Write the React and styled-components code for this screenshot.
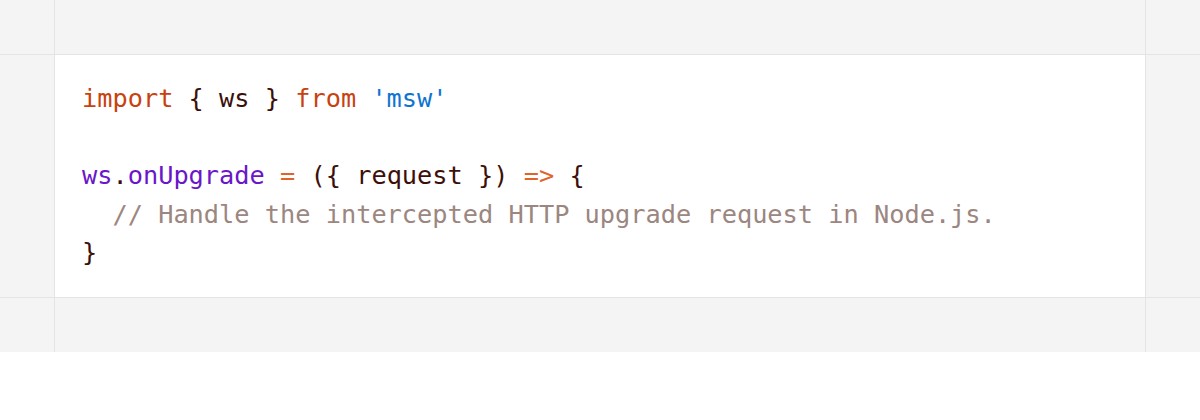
import React from 'react';
import styled, { createGlobalStyle } from 'styled-components';

const GlobalStyle = createGlobalStyle`
    html, body {
        margin: 0;
        padding: 0;
        background: #ffffff;
    }
`;

const Frame = styled.div`
    display: grid;
    grid-template-columns: 54px 1fr 54px;
    grid-template-rows: 54px 242px 54px;
    gap: 1px;
    background: #e4e4e4;
    width: 1200px;
`;

const Cell = styled.div`
    background: ${(p) => (p.main ? '#ffffff' : '#f4f4f4')};
`;

const Code = styled.pre`
    margin: 0;
    padding: 25px 0 0 27px;
    font-family: "DejaVu Sans Mono", "Liberation Mono", monospace;
    font-size: 25.3px;
    line-height: 38.5px;
    color: #3d0f0a;
    white-space: pre;
`;

const Line = styled.div`
    min-height: 38.5px;
`;

const Token = styled.span`
    color: ${(p) => p.color};
`;

const colors = {
    keyword: '#c8420f',
    string: '#0f74d1',
    prop: '#6a16c9',
    op: '#e0642a',
    plain: '#3d0f0a',
    comment: '#9c8680',
};

function App() {
    return (
        <>
            <GlobalStyle />
            <Frame>
                <Cell />
                <Cell />
                <Cell />
                <Cell />
                <Cell main>
                    <Code>
                        <Line>
                            <Token color={colors.keyword}>import</Token>
                            {' { ws } '}
                            <Token color={colors.keyword}>from</Token>{' '}
                            <Token color={colors.string}>'msw'</Token>
                        </Line>
                        <Line />
                        <Line>
                            <Token color={colors.prop}>ws</Token>.
                            <Token color={colors.prop}>onUpgrade</Token>{' '}
                            <Token color={colors.op}>=</Token>
                            {' ({ request }) '}
                            <Token color={colors.op}>=&gt;</Token>
                            {' {'}
                        </Line>
                        <Line>
                            {'  '}
                            <Token color={colors.comment}>
                                // Handle the intercepted HTTP upgrade request in Node.js.
                            </Token>
                        </Line>
                        <Line>{'}'}</Line>
                    </Code>
                </Cell>
                <Cell />
                <Cell />
                <Cell />
                <Cell />
            </Frame>
        </>
    );
}

export default App;
